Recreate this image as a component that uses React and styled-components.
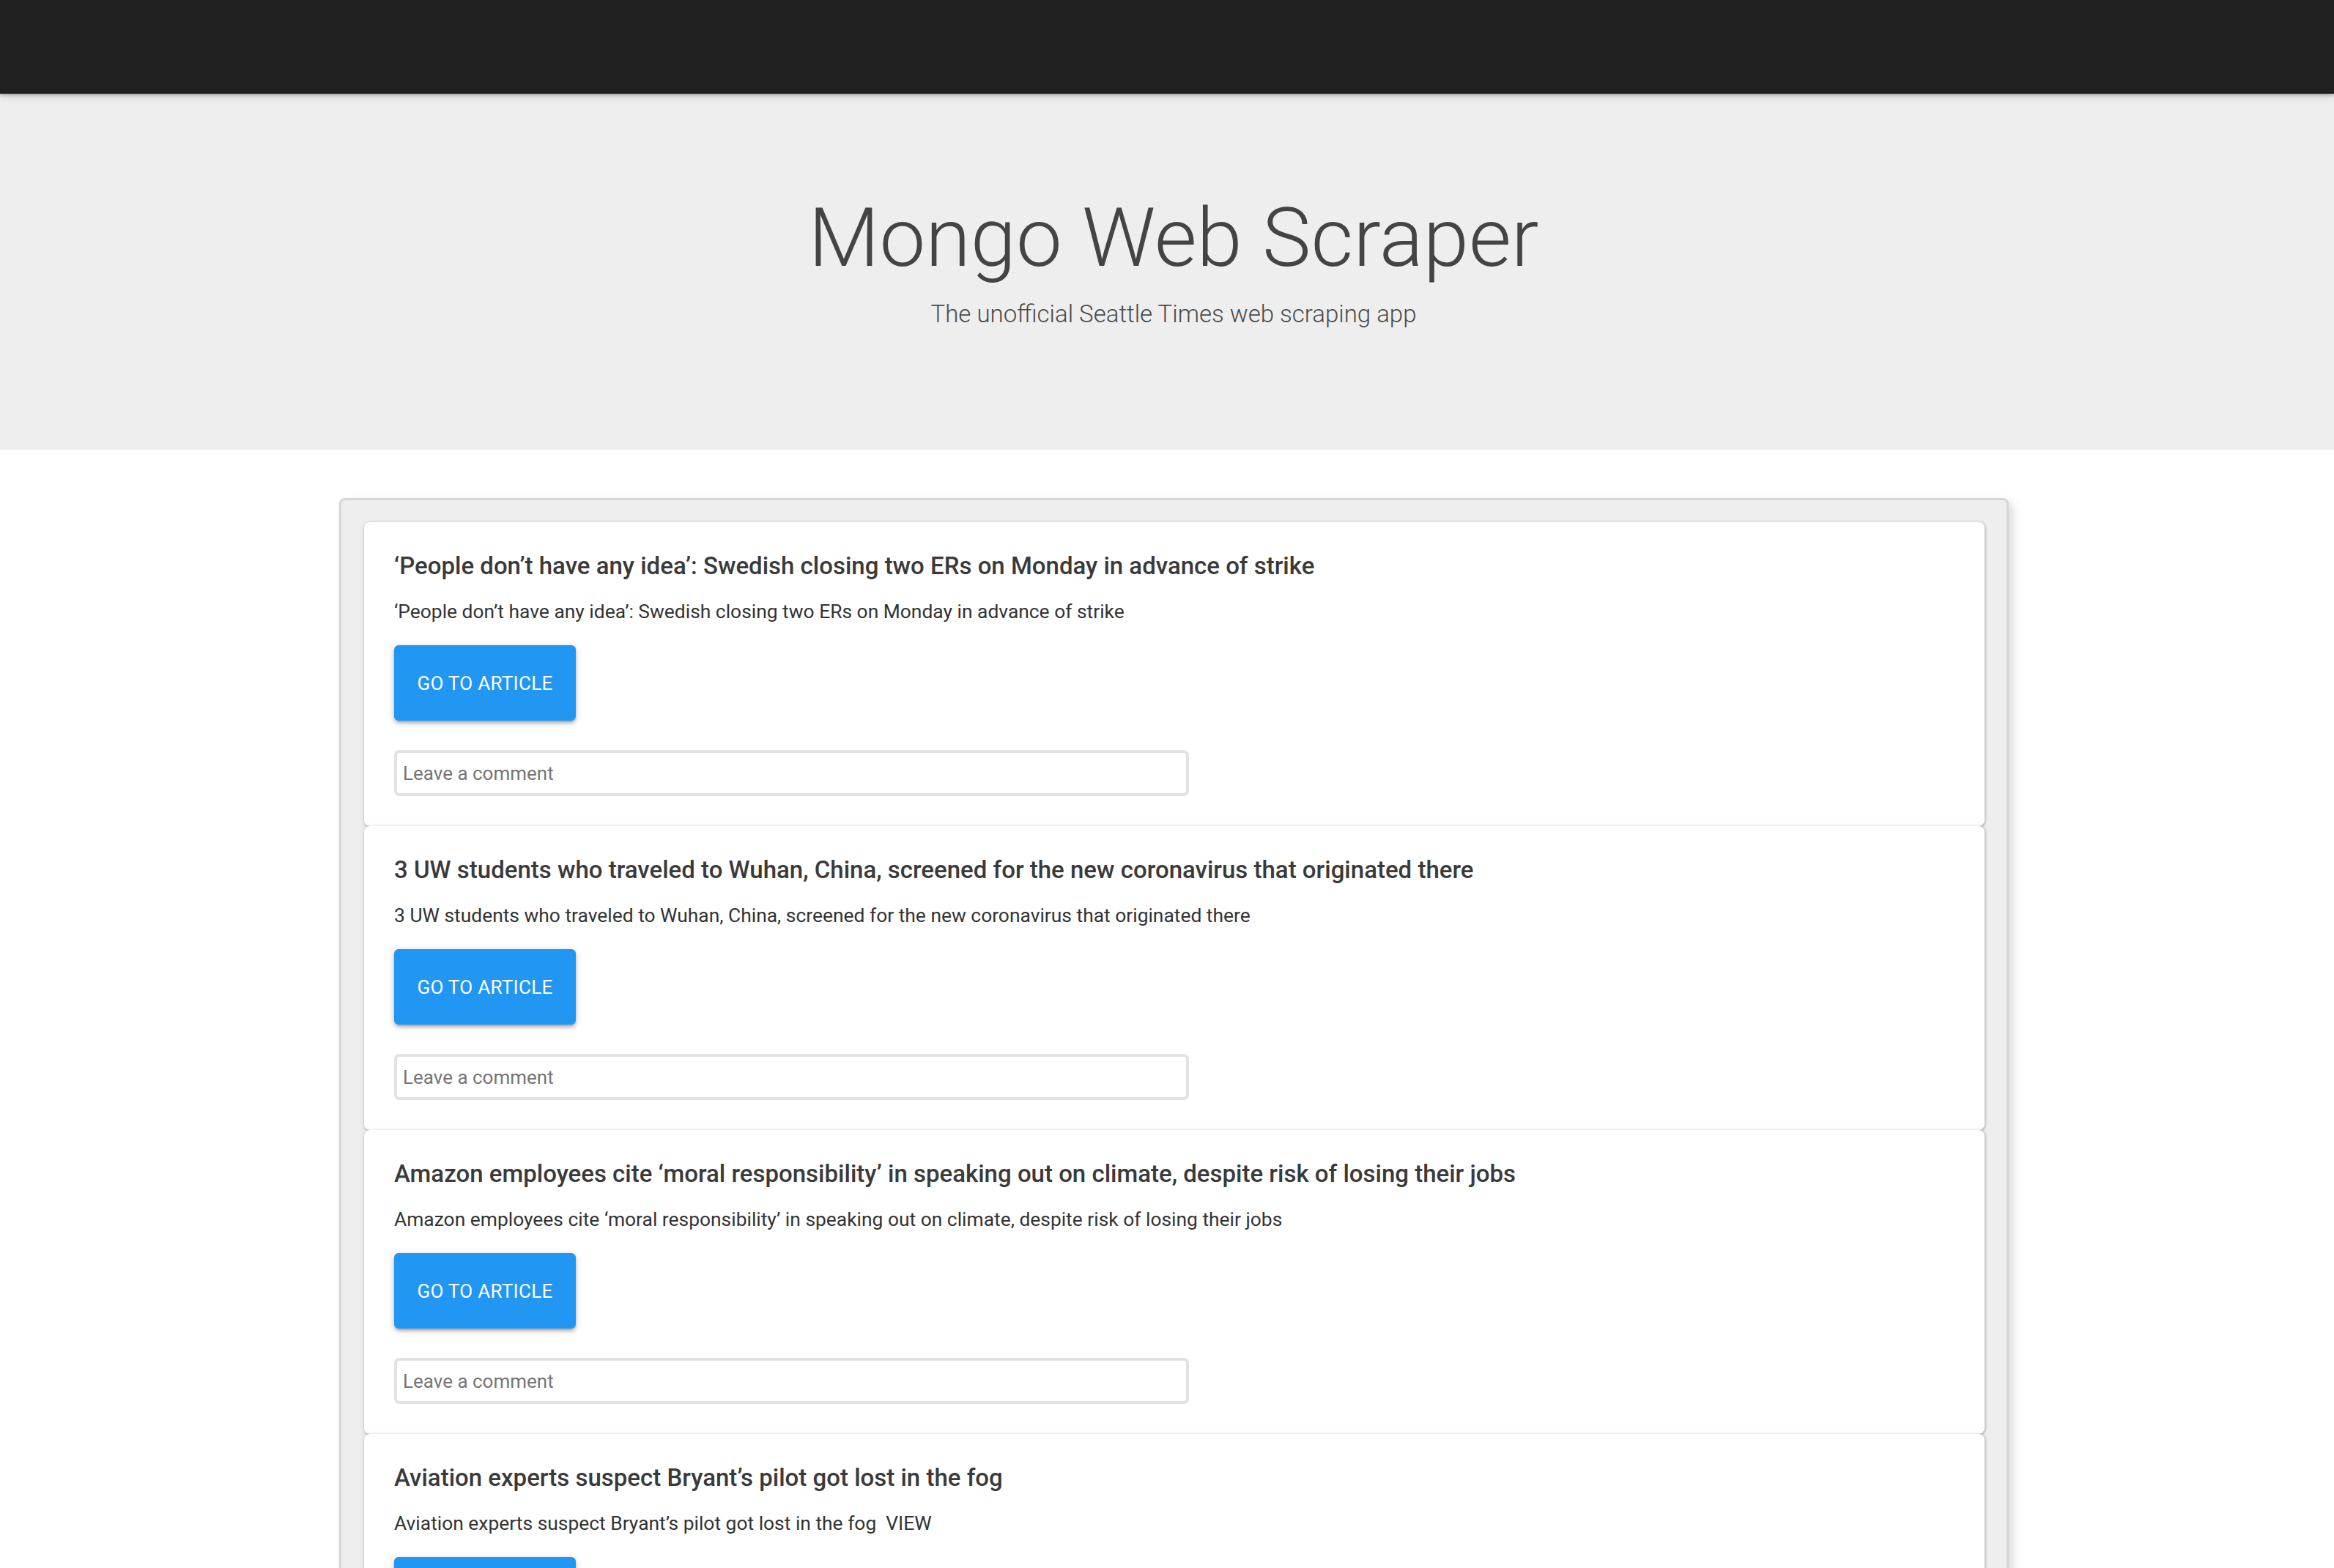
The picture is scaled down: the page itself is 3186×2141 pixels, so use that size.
import React from "react";
import styled, { createGlobalStyle } from "styled-components";

const GlobalStyle = createGlobalStyle`
  html, body {
    margin: 0;
    padding: 0;
    background: #ffffff;
    font-family: Roboto, "Noto Sans", "Liberation Sans", sans-serif;
    color: #333;
  }
  * { box-sizing: border-box; }
`;

const Navbar = styled.nav`
  height: 128px;
  background: #212121;
  box-shadow: 0 2px 4px rgba(0, 0, 0, 0.22), 0 4px 10px rgba(0, 0, 0, 0.12);
  position: relative;
  z-index: 2;
`;

const Hero = styled.header`
  height: 486px;
  background: #eeeeee;
  display: flex;
  flex-direction: column;
  align-items: center;
  padding-left: 18px;
  padding-top: 127px;
`;

const HeroTitle = styled.h1`
  margin: 0;
  font-size: 112px;
  line-height: 140px;
  font-weight: 300;
  color: #444444;
`;

const HeroSubtitle = styled.p`
  margin: 0;
  margin-top: 12px;
  font-size: 33px;
  line-height: 44px;
  font-weight: 300;
  color: #4a4a4a;
`;

const Main = styled.main`
  padding: 66px 444px 0 463px;
`;

const Panel = styled.section`
  background: #eeeeee;
  border: 3px solid #d6d6d6;
  border-bottom: none;
  border-radius: 8px 8px 0 0;
  padding: 30px 30px 0 31px;
  box-shadow: 6px 6px 14px rgba(0, 0, 0, 0.14);
  display: flex;
  flex-direction: column;
`;

const Card = styled.article`
  background: #ffffff;
  border-radius: 8px;
  padding: 39px 41px 41px 41px;
  box-shadow: 0 2px 3px rgba(0, 0, 0, 0.14), 0 1px 6px rgba(0, 0, 0, 0.12), 2px 0 3px rgba(0, 0, 0, 0.1);
  display: flex;
  flex-direction: column;
  align-items: flex-start;
`;

const CardTitle = styled.h2`
  margin: 0;
  font-size: 33px;
  line-height: 41px;
  font-weight: 500;
  color: #3a3a3a;
`;

const CardText = styled.p`
  margin: 22px 0 0 0;
  font-size: 26.4px;
  line-height: 40px;
  font-weight: 400;
  color: #333333;
  white-space: pre-wrap;
`;

const ArticleButton = styled.a`
  margin-top: 26px;
  height: 103px;
  width: 248px;
  display: flex;
  align-items: center;
  justify-content: center;
  background: #2196f3;
  color: #ffffff;
  border-radius: 6px;
  font-size: 26px;
  letter-spacing: 0.3px;
  font-weight: 400;
  text-transform: uppercase;
  text-decoration: none;
  box-shadow: 0 4px 4px rgba(0, 0, 0, 0.14), 0 6px 2px -4px rgba(0, 0, 0, 0.12), 0 2px 10px rgba(0, 0, 0, 0.2);
`;

const CommentInput = styled.input`
  margin-top: 40px;
  width: 1085px;
  height: 63px;
  border: 4px solid #e2e2e2;
  border-radius: 7px;
  padding: 0 8px;
  font-family: Roboto, "Noto Sans", "Liberation Sans", sans-serif;
  font-size: 26px;
  color: #333;
  background: #fff;
  outline: none;
  &::placeholder {
    color: #757575;
  }
`;

const articles = [
  {
    title: "‘People don’t have any idea’: Swedish closing two ERs on Monday in advance of strike",
    summary: "‘People don’t have any idea’: Swedish closing two ERs on Monday in advance of strike",
  },
  {
    title: "3 UW students who traveled to Wuhan, China, screened for the new coronavirus that originated there",
    summary: "3 UW students who traveled to Wuhan, China, screened for the new coronavirus that originated there",
  },
  {
    title: "Amazon employees cite ‘moral responsibility’ in speaking out on climate, despite risk of losing their jobs",
    summary: "Amazon employees cite ‘moral responsibility’ in speaking out on climate, despite risk of losing their jobs",
  },
  {
    title: "Aviation experts suspect Bryant’s pilot got lost in the fog",
    summary: "Aviation experts suspect Bryant’s pilot got lost in the fog  VIEW",
  },
];

export default function App() {
  return (
    <>
      <GlobalStyle />
      <Navbar />
      <Hero>
        <HeroTitle>Mongo Web Scraper</HeroTitle>
        <HeroSubtitle>The unofficial Seattle Times web scraping app</HeroSubtitle>
      </Hero>
      <Main>
        <Panel>
          {articles.map((a, i) => (
            <Card key={i}>
              <CardTitle>{a.title}</CardTitle>
              <CardText>{a.summary}</CardText>
              <ArticleButton href="#">Go to article</ArticleButton>
              <CommentInput type="text" placeholder="Leave a comment" />
            </Card>
          ))}
        </Panel>
      </Main>
    </>
  );
}
